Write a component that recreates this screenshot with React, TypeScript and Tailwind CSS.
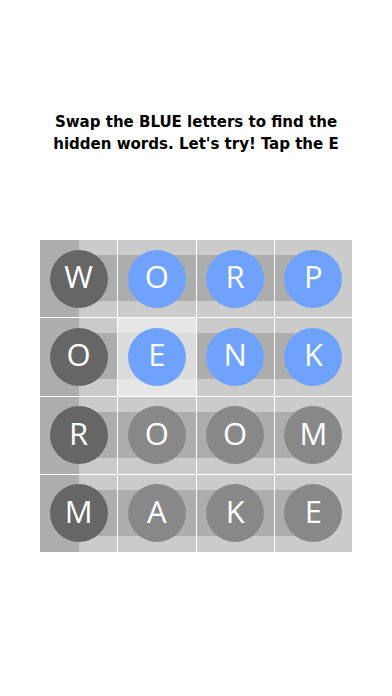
import React from "react";

type Cell = { ch: string; color: "dark" | "blue" | "gray"; hl?: boolean };

const rows: Cell[][] = [
  [
    { ch: "W", color: "dark" },
    { ch: "O", color: "blue" },
    { ch: "R", color: "blue" },
    { ch: "P", color: "blue" },
  ],
  [
    { ch: "O", color: "dark" },
    { ch: "E", color: "blue", hl: true },
    { ch: "N", color: "blue" },
    { ch: "K", color: "blue" },
  ],
  [
    { ch: "R", color: "dark" },
    { ch: "O", color: "gray" },
    { ch: "O", color: "gray" },
    { ch: "M", color: "gray" },
  ],
  [
    { ch: "M", color: "dark" },
    { ch: "A", color: "gray" },
    { ch: "K", color: "gray" },
    { ch: "E", color: "gray" },
  ],
];

function Tile({ cell, col }: { cell: Cell; col: number }) {
  const bg = cell.hl ? "bg-[#e6e6e6]" : "bg-[#cbcbcb]";
  const band = cell.hl ? "bg-[#dcdcdc]" : "bg-[#adadad]";
  const circle =
    cell.color === "dark"
      ? "bg-[#666666]"
      : cell.color === "blue"
      ? "bg-[#6ea2fc]"
      : "bg-[#888888]";
  const bandPos =
    col === 0
      ? "left-1/2 right-0"
      : col === 3
      ? "left-0 right-1/2"
      : "left-0 right-0";
  return (
    <div className={`relative flex items-center justify-center ${bg}`}>
      {col === 0 && (
        <div className="absolute left-0 top-0 bottom-0 w-1/2 bg-[#adadad]" />
      )}
      <div className={`absolute top-[15px] h-[46px] ${bandPos} ${band}`} />
      <div
        className={`relative z-10 flex h-[58px] w-[58px] items-center justify-center rounded-full ${circle}`}
      >
        <span
          className="text-[31px] leading-none text-white pb-[4px]"
          style={{ fontFamily: '"Open Sans", sans-serif' }}
        >
          {cell.ch}
        </span>
      </div>
    </div>
  );
}

export default function App() {
  return (
    <div className="flex h-[696px] w-[392px] flex-col items-center bg-white">
      <div
        className="pt-[110px] text-center text-[16.7px] font-bold leading-[22px] text-black"
        style={{ fontFamily: '"DejaVu Sans Condensed", "DejaVu Sans", sans-serif' }}
      >
        <p>Swap the BLUE letters to find the</p>
        <p>hidden words. Let's try! Tap the E</p>
      </div>
      <div className="mt-[86px] grid h-[312px] w-[312px] grid-cols-4 grid-rows-4 gap-px bg-white">
        {rows.map((r, ri) =>
          r.map((c, ci) => <Tile key={`${ri}-${ci}`} cell={c} col={ci} />)
        )}
      </div>
    </div>
  );
}
